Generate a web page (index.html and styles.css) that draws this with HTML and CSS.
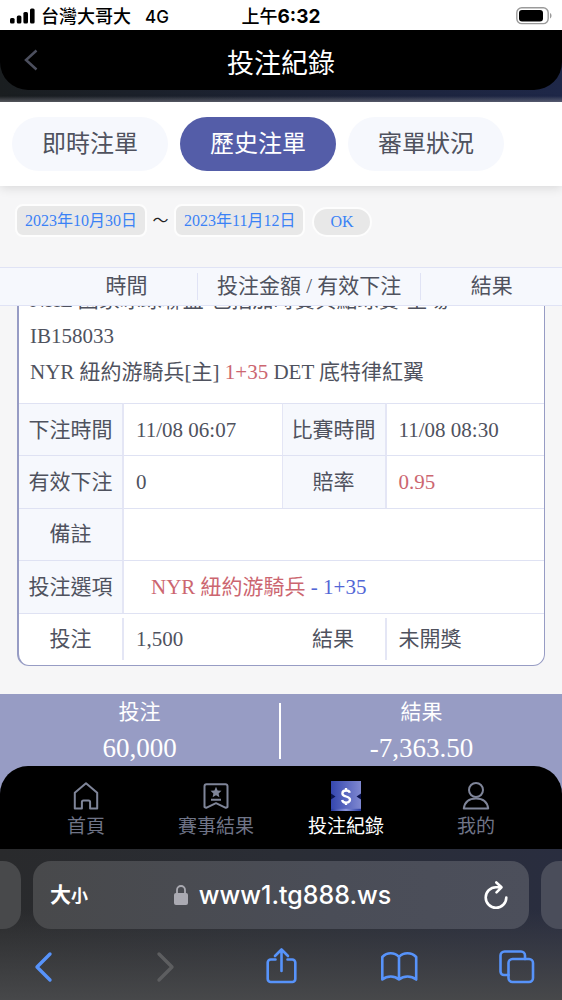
FILE: index.html
```html
<!DOCTYPE html>
<html lang="zh-Hant">
<head>
<meta charset="utf-8">
<meta name="viewport" content="width=device-width, initial-scale=1">
<title>投注紀錄</title>
<link rel="stylesheet" href="styles.css">
</head>
<body>
<div class="status">
  <div class="status-left">
    <svg class="signal" viewBox="0 0 25 16" aria-hidden="true"><rect x="0" y="10" width="4.6" height="5.5" rx="1.5"/><rect x="6.8" y="7.5" width="4.6" height="8" rx="1.5"/><rect x="13.4" y="4" width="4.6" height="11.5" rx="1.5"/><rect x="20" y="0.5" width="4.6" height="15" rx="1.5"/></svg>
    <span>台灣大哥大</span>
    <span class="network">4G</span>
  </div>
  <div class="clock">上午<b>6:32</b></div>
  <div class="status-right">
    <svg class="battery" viewBox="0 0 36 18" aria-hidden="true"><rect x="0.8" y="0.8" width="31.4" height="15.8" rx="5" fill="none" stroke="#9a9a9a" stroke-width="1.4"/><rect x="3" y="3" width="24" height="11.4" rx="3"/><path d="M34 6v5.4c2-1 2-4.4 0-5.4z" fill="#9a9a9a"/></svg>
  </div>
</div>

<div class="header-wrap">
  <header class="header">
    <button class="back" type="button" aria-label="返回"><svg viewBox="0 0 14 22"><path d="M12.500 1.500L2 11l10.500 9.500"/></svg></button>
    <h1>投注紀錄</h1>
    <span></span>
  </header>
</div>

<nav class="tabs">
  <button type="button" class="tab">即時注單</button>
  <button type="button" class="tab tab-active">歷史注單</button>
  <button type="button" class="tab">審單狀況</button>
</nav>

<div class="filter">
  <button type="button" class="date">2023年10月30日</button>
  <span class="tilde">～</span>
  <button type="button" class="date">2023年11月12日</button>
  <button type="button" class="date ok">OK</button>
</div>

<div class="columns">
  <span></span>
  <span>時間</span>
  <span class="split">投注金額 / 有效下注</span>
  <span>結果</span>
</div>

<main class="list">
  <article class="card">
    <div class="match">
      <div>NHL 國家冰球聯盟-包括加時賽與點球賽-全場</div>
      <div>IB158033</div>
      <div>NYR 紐約游騎兵[主] <span class="red">1+35</span> DET 底特律紅翼</div>
    </div>
    <table class="detail">
      <tr><th>下注時間</th><td>11/08 06:07</td><th>比賽時間</th><td>11/08 08:30</td></tr>
      <tr><th>有效下注</th><td>0</td><th>賠率</th><td class="red">0.95</td></tr>
      <tr><th>備註</th><td colspan="3"></td></tr>
      <tr><th>投注選項</th><td colspan="3" class="pick"><span class="red">NYR 紐約游騎兵</span> <span class="blue">- 1+35</span></td></tr>
      <tr class="total"><th><div>投注</div></th><td>1,500</td><th><div>結果</div></th><td>未開獎</td></tr>
    </table>
  </article>
</main>

<section class="summary">
  <div class="sum"><span>投注</span><strong>60,000</strong></div>
  <div class="sum"><span>結果</span><strong>-7,363.50</strong></div>
</section>

<div class="nav-wrap">
  <nav class="nav">
    <a href="#home"><svg viewBox="0 0 30 30"><path d="M15 2.200L3.800 11.800V27.600h7.100v-6.600a1.600 1.600 0 0 1 1.600-1.600h5a1.600 1.600 0 0 1 1.600 1.600v6.600h7.100V11.800z"/></svg>首頁</a>
    <a href="#results"><svg viewBox="0 0 30 30"><path d="M5.500 3.200h19a2 2 0 0 1 2 2V26l-1.700.8L15 22.200l-9.800 4.600-1.700-.8V5.200a2 2 0 0 1 2-2zM10 18.800h10"/><path class="solid" d="M15 5.800l1.600 3.600 3.900.4-2.900 2.600.8 3.900-3.400-2-3.400 2 .8-3.900-2.900-2.600 3.900-.4z"/></svg>賽事結果</a>
    <a href="#records" class="current"><svg viewBox="0 0 30 30"><defs><linearGradient id="ticket" x1="0" x2="1"><stop offset="0" stop-color="#3547b0"/><stop offset="1" stop-color="#7f88d0"/></linearGradient><linearGradient id="edge" x1="0" x2="1"><stop offset="0" stop-color="#2538a0"/><stop offset=".5" stop-color="#8b96dc"/><stop offset="1" stop-color="#2538a0"/></linearGradient></defs><path d="M0 0h30v30H0z" fill="url(#ticket)" stroke="none"/><path d="M0 27.800h30V30H0z" fill="url(#edge)" stroke="none"/><path d="M0 12.500l4.500 3-4.500 3zM30 12.500l-4.500 3 4.500 3z" fill="#0b1450" stroke="none"/><path class="dollar" d="M18.800 11.800c-.5-1.700-1.900-2.300-3.700-2.300-2.200 0-3.700 1.100-3.700 2.900 0 4.200 7.600 2 7.600 6.200 0 1.900-1.600 3-3.900 3-2 0-3.600-.8-4-2.700M15 7v2.300M15 21.500V24"/></svg>投注紀錄</a>
    <a href="#mine"><svg viewBox="0 0 30 30"><circle cx="15" cy="9" r="7"/><path d="M2.800 27.500c1-7 5.800-10 12.200-10s11.200 3 12.200 10z"/></svg>我的</a>
  </nav>
</div>

<footer class="browser">
  <div class="address-row">
    <span class="peek peek-left"></span>
    <div class="address">
      <button type="button" class="size">大<small>小</small></button>
      <div class="url"><svg viewBox="0 0 16 22" aria-hidden="true"><path d="M4 10V6a4 4 0 0 1 8 0v4" fill="none" stroke="#aaaab2" stroke-width="1.800"/><rect x="1" y="9" width="14" height="12" rx="2" fill="#aaaab2"/></svg>www1.tg888.ws</div>
      <button type="button" class="reload" aria-label="重新載入"><svg viewBox="0 0 26 30"><path d="M23.300 17.500a10.300 10.300 0 1 1-10.300-10.300h5M13.300 2.500l5.200 4.800-5 5"/></svg></button>
    </div>
    <span class="peek peek-right"></span>
  </div>
  <div class="toolbar">
    <button type="button" aria-label="上一頁"><svg viewBox="0 0 40 40"><path class="chevron" d="M26 7L13 20l13 13"/></svg></button>
    <button type="button" class="disabled" aria-label="下一頁" disabled><svg viewBox="0 0 40 40"><path class="chevron" d="M17 7l13 13-13 13"/></svg></button>
    <button type="button" aria-label="分享"><svg viewBox="0 0 40 40"><path d="M14.500 12.500H9.700a3 3 0 0 0-3 3V32a3 3 0 0 0 3 3h21.600a3 3 0 0 0 3-3V15.500a3 3 0 0 0-3-3h-4.800M20.500 24V2.500M14 9l6.500-6.500L27 9"/></svg></button>
    <button type="button" aria-label="書籤"><svg viewBox="0 0 40 40"><path d="M20 10c-4.500-5-12-5-16.700 0v22.500c5-4 12-4 16.700 0 5-4 12-4 17.200 0V10C32.500 5 24.500 5 20 10zm0 0v22.500"/></svg></button>
    <button type="button" aria-label="分頁"><svg viewBox="0 0 40 40"><rect x="11.500" y="12" width="24.500" height="23" rx="4"/><path d="M11.500 28H7a3.500 3.500 0 0 1-3.500-3.500V8.500A4 4 0 0 1 7.500 4.500H24a4 4 0 0 1 4 4V12"/></svg></button>
  </div>
</footer>
</body>
</html>
```
FILE: styles.css
```css
* { box-sizing: border-box; }

body {
  margin: 0;
  height: 100vh;
  display: flex;
  flex-direction: column;
  background: #f6f6f7;
  color: #4f525e;
  font-family: "Liberation Serif", "Noto Sans CJK TC", serif;
  font-size: 21px;
}

button {
  border: 0;
  padding: 0;
  background: none;
  color: inherit;
  font: inherit;
}

svg { display: block; }

/* Status bar */
.status {
  display: grid;
  grid-template-columns: 1fr auto 1fr;
  align-items: center;
  height: 30px;
  padding: 0 10px;
  background: #fff;
  color: #000;
  font: 500 18px/30px Inter, "Noto Sans CJK TC", sans-serif;
}
.status-left { display: flex; align-items: center; gap: 6px; }
.status span, .clock { padding-top: 2px; }
.signal { width: 25px; height: 16px; }
.network { margin-left: 8px; font-size: 17px; }
.clock b { font-size: 19px; }
.status-right { display: flex; justify-content: flex-end; }
.battery { width: 36px; height: 18px; }

/* Page header */
.header-wrap {
  padding-bottom: 12px;
  background:
    linear-gradient(to top, rgba(150, 150, 160, .5), transparent 6px),
    linear-gradient(to right, #1a1e20, #1e2748);
}
.header {
  display: grid;
  grid-template-columns: 1fr auto 1fr;
  align-items: center;
  height: 60px;
  padding: 0 24px;
  border-radius: 0 0 28px 28px;
  background: #000;
  color: #fff;
}
.header h1 { margin: 0; padding-top: 8px; font-size: 27px; font-weight: 400; line-height: 40px; }
.back { justify-self: start; }
.back svg { width: 14px; height: 22px; fill: none; stroke: #4c4f5e; stroke-width: 2.5; }

/* Tabs */
.tabs {
  display: flex;
  gap: 12px;
  padding: 15px 12px;
  background: #fff;
  box-shadow: 0 2px 10px rgba(0, 0, 0, .12);
}
.tab {
  width: 156px;
  height: 54px;
  border-radius: 27px;
  background: #f6f8fd;
  font-size: 24px;
  line-height: 54px;
}
.tab-active { background: #545da8; color: #fff; }

/* Date filter */
.filter {
  display: flex;
  align-items: center;
  height: 81px;
  padding: 0 15px 12px;
  color: #222;
}
.date {
  height: 33px;
  padding: 0 8px;
  border: 2px solid #fdfdfd;
  border-radius: 8px;
  background: #e8e8e8;
  color: #3b82f6;
  font-size: 16px;
  line-height: 28px;
}
.tilde { width: 27px; font-size: 16px; line-height: 28px; text-align: center; }
.ok { height: 30px; margin: 2px 0 0 7px; padding: 0 16px; border-radius: 15px; line-height: 26px; }

/* Column heads */
.columns {
  position: relative;
  display: grid;
  grid-template-columns: 10% 25% 40% 25%;
  align-items: center;
  height: 39px;
  border: solid #e0e3f5;
  border-width: 1px 0;
  background: #f6f8fd;
  text-align: center;
  line-height: 27px;
}
.split { border: solid #e0e3f5; border-width: 0 1px; }

/* Bet list, scrolled to its end */
.list {
  flex: 1;
  min-height: 0;
  display: flex;
  flex-direction: column;
  justify-content: flex-end;
  overflow: hidden;
  padding: 0 17px 28px;
}
.card {
  flex: none;
  overflow: hidden;
  border: 1px solid #979cc4;
  border-left-width: 2px;
  border-radius: 12px;
  background: #fff;
}
.match { padding: 0 11px 13px; line-height: 36px; }
.red { color: #cc6670; }
.blue { color: #5266d6; }

.detail {
  width: 100%;
  height: 262px;
  table-layout: fixed;
  border-collapse: separate;
  border-spacing: 0;
  line-height: 30px;
}
.detail tr { height: 20%; }
.detail th, .detail td { padding: 0; border-top: 1px solid #dfe2f3; font-weight: 400; }
.detail th { width: 20%; border-right: 2px solid #e4e6f5; background: #f6f8fd; }
.detail td { padding-left: 12px; text-align: left; }
.detail td + th { border-left: 1px solid #e4e6f5; }
.detail .pick { padding-left: 27px; }
.detail .total th { border-right: 0; border-left: 0; background: none; }
.total th div { border-right: 2px solid #e4e6f5; line-height: 42px; }

/* Totals */
.summary {
  display: grid;
  grid-template-columns: 1fr 1fr;
  height: 72px;
  padding: 9px 0 7px;
  background: #979cc4;
  color: #fff;
}
.sum { display: flex; flex-direction: column; align-items: center; line-height: 18px; }
.sum:first-child { border-right: 2px solid #fff; }
.sum strong { padding-top: 16px; font-size: 27px; font-weight: 400; line-height: 22px; }

/* App navigation */
.nav-wrap { background: #979cc4 linear-gradient(#000, #000) bottom / 100% 50% no-repeat; }
.nav {
  display: grid;
  grid-template-columns: repeat(4, 1fr);
  height: 83px;
  padding: 15px 21px 0;
  border-radius: 28px 28px 0 0;
  background: #000;
}
.nav a {
  display: flex;
  flex-direction: column;
  align-items: center;
  gap: 2px;
  color: #6f7487;
  font-size: 19px;
  line-height: 28px;
  text-decoration: none;
}
.nav svg { width: 30px; height: 30px; fill: none; stroke: #7f8599; stroke-width: 2; stroke-linejoin: round; }
.nav .solid { fill: #7f8599; stroke: none; }
.nav .dollar { stroke: #fff; stroke-width: 2.3; }
.nav .current { color: #fff; }

/* Browser chrome */
.browser {
  height: 151px;
  padding-top: 12px;
  background:
    linear-gradient(to bottom, transparent 40%, #47484a),
    linear-gradient(to right, #292a2c, #2a2d35 50%, #292d3f);
}
.address-row { display: grid; grid-template-columns: 21px 1fr 21px; gap: 12px; height: 68px; }
.address {
  display: grid;
  grid-template-columns: 1fr auto 1fr;
  align-items: center;
  padding: 0 20px 0 17px;
  border-radius: 18px;
  background: linear-gradient(to right, #48494b, #4a4d57 60%, #4c4f5b);
  color: #fff;
  font-family: Inter, "Noto Sans CJK TC", sans-serif;
}
.peek { background: #48494b; }
.peek-left { border-radius: 0 18px 18px 0; }
.peek-right { border-radius: 18px 0 0 18px; background: #4a4d5a; }
.size { justify-self: start; font-weight: 700; line-height: 30px; }
.size small { font-size: 17px; }
.url { display: flex; align-items: center; gap: 10px; padding-left: 5px; font-size: 25px; font-weight: 500; }
.url svg { width: 16px; height: 22px; }
.reload { justify-self: end; }
.reload svg { width: 26px; height: 30px; fill: none; stroke: #fff; stroke-width: 2.6; stroke-linecap: round; stroke-linejoin: round; }
.toolbar { display: flex; justify-content: space-between; padding: 18px 25px 0 24px; }
.toolbar svg { width: 40px; height: 40px; fill: none; stroke: #5793fa; stroke-width: 2.6; stroke-linejoin: round; stroke-linecap: round; }
.toolbar .chevron { stroke-width: 3.4; }
.toolbar .disabled svg { stroke: #5d5e60; }
```
